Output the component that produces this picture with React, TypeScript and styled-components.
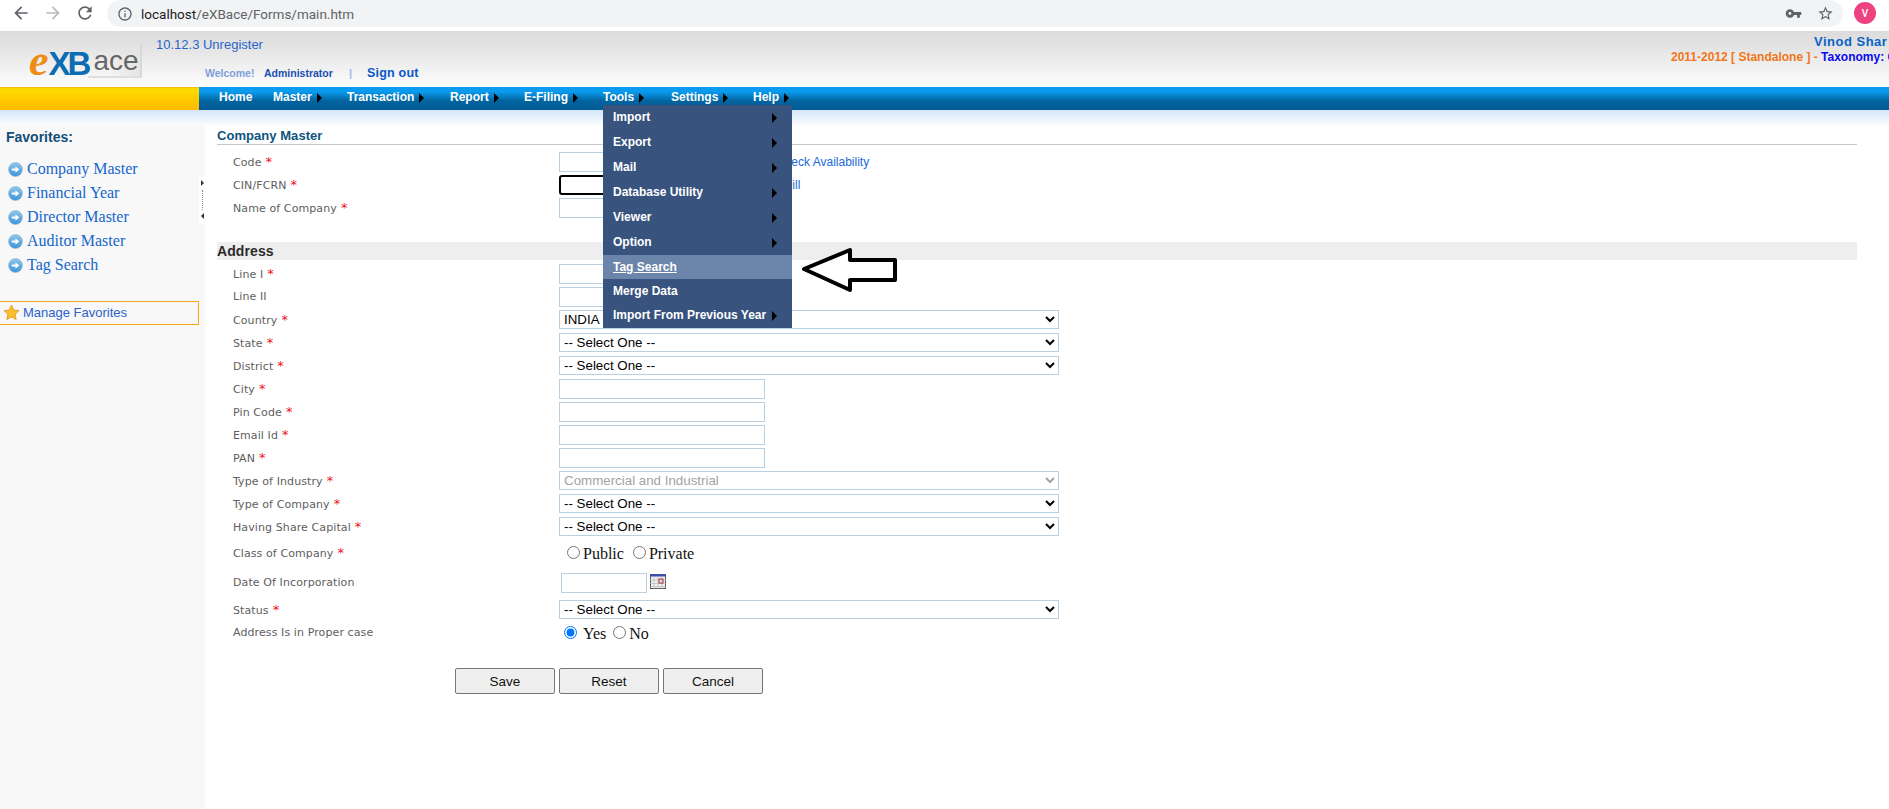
import React from "react";
import styled, { createGlobalStyle } from "styled-components";

const Global = createGlobalStyle`
  html, body { margin: 0; padding: 0; background: #fff; overflow: hidden; }
  body { font-family: "Liberation Sans", Arial, sans-serif; }
  * { box-sizing: border-box; }
`;

const Page = styled.div`
  position: relative;
  width: 1889px;
  height: 809px;
  overflow: hidden;
  display: flex;
  flex-direction: column;
`;

/* Browser chrome */
const Toolbar = styled.div`
  height: 31px;
  flex: none;
  background: #fff;
  display: flex;
  align-items: flex-start;
  padding-left: 11px;
`;
const NavIcon = styled.svg<{ $dim?: boolean }>`
  width: 20px;
  height: 20px;
  margin: 3px 12px 0 0;
  fill: ${(p) => (p.$dim ? "#b9bbbe" : "#5f6368")};
  flex: none;
`;
const UrlPill = styled.div`
  width: 1736px;
  height: 27px;
  background: #f1f3f4;
  border-radius: 14px;
  display: flex;
  align-items: center;
  padding: 0 9px 0 10px;
`;
const PillIcon = styled.svg`
  width: 16px;
  height: 16px;
  fill: #5f6368;
  flex: none;
`;
const UrlText = styled.span`
  font: 13.5px Roboto, sans-serif;
  color: #5f6368;
  margin-left: 8px;
  flex: 1;
  b { font-weight: 400; color: #202124; }
`;
const PillAction = styled.svg`
  width: 17px;
  height: 17px;
  fill: #5f6368;
  margin-left: 15px;
  flex: none;
`;
const Avatar = styled.div`
  width: 22px;
  height: 22px;
  border-radius: 50%;
  background: #ee4280;
  color: #fff;
  font: 500 10px Roboto, sans-serif;
  display: flex;
  align-items: center;
  justify-content: center;
  margin: 2px 0 0 11px;
  flex: none;
`;

/* App header */
const Header = styled.header`
  height: 56px;
  flex: none;
  background: linear-gradient(#dcdcdc 0%, #e2e2e2 25%, #fdfdfd 100%);
  display: flex;
  position: relative;
`;
const LogoBox = styled.div`
  width: 156px;
  flex: none;
  padding: 13px 0 0 29px;
`;
const Logo = styled.div`
  width: 114px;
  height: 34px;
  display: flex;
  align-items: baseline;
  line-height: 34px;
  white-space: nowrap;
`;
const LogoE = styled.span`
  font: italic bold 44px/34px "Liberation Serif", serif;
  color: #ef8c13;
`;
const LogoXB = styled.span`
  font: bold 33px/34px "Liberation Sans", sans-serif;
  color: #0d6db2;
  letter-spacing: -3px;
`;
const LogoAce = styled.span`
  font: 28px/34px "Liberation Sans", sans-serif;
  color: #666;
  padding: 0 1px 0 5px;
  align-self: stretch;
  border-right: 2px solid #d8d8d8;
  border-bottom: 2px solid #dedede;
  background: linear-gradient(110deg, transparent 50%, #e4e4e4);
`;
const HeaderMid = styled.div`
  flex: 1;
`;
const Version = styled.div`
  font-size: 13px;
  color: #2966c8;
  margin-top: 6px;
  height: 14px;
  line-height: 16px;
`;
const WelcomeRow = styled.div`
  display: flex;
  align-items: center;
  margin: 12px 0 0 49px;
  height: 20px;
  white-space: nowrap;
`;
const Welcome = styled.span`
  font: bold 10.5px "Liberation Sans", sans-serif;
  color: #7e9fd8;
  width: 59px;
`;
const Admin = styled.span`
  font: bold 10.5px "Liberation Sans", sans-serif;
  color: #1a4fb0;
  width: 85px;
`;
const Sep = styled.span`
  font: bold 11px "Liberation Sans", sans-serif;
  color: #9bbce6;
  width: 18px;
`;
const SignOut = styled.span`
  font: bold 12.5px "Liberation Sans", sans-serif;
  color: #0b57c8;
  letter-spacing: 0.2px;
`;
const HeaderRight = styled.div`
  width: 218px;
  flex: none;
  overflow: hidden;
  white-space: nowrap;
  padding-top: 3px;
`;
const UserName = styled.div`
  font: bold 13px/16px "Liberation Sans", sans-serif;
  color: #0b62c4;
  padding-left: 143px;
  letter-spacing: 0.5px;
`;
const YearLine = styled.div`
  font: bold 12px/14px "Liberation Sans", sans-serif;
  color: #f2761a;
`;
const Taxonomy = styled.span`
  color: #0a0af0;
`;

/* Nav */
const NavBar = styled.nav`
  height: 23px;
  flex: none;
  display: flex;
  position: relative;
`;
const NavGold = styled.div`
  width: 199px;
  flex: none;
  background: linear-gradient(#f5b000 0, #ffdd00 8%, #ffc400 70%, #ffb900 100%);
`;
const NavBlue = styled.div`
  flex: 1;
  position: relative;
  background: linear-gradient(#0a9bef 0, #0a9bef 20%, #02649f 60%, #025a94 100%);
  display: flex;
  align-items: center;
`;
const NavItem = styled.div<{ $w: number }>`
  width: ${(p) => p.$w}px;
  flex: none;
  display: flex;
  align-items: center;
  font: bold 12px "Liberation Sans", sans-serif;
  color: #fff;
  height: 100%;
  padding-bottom: 3px;
  white-space: nowrap;
`;
const Caret = styled.i`
  display: inline-block;
  width: 0;
  height: 0;
  border-left: 5px solid #000;
  border-top: 5px solid transparent;
  border-bottom: 5px solid transparent;
  margin-left: 5px;
  margin-top: 1px;
`;
const NavSpacer = styled.div`
  width: 20px;
  flex: none;
`;
const Menu = styled.div`
  position: absolute;
  left: 404px;
  top: 18px;
  width: 189px;
  background: #39537f;
  z-index: 5;
  height: 223px;
`;
const MenuItem = styled.div<{ $h: number; $active?: boolean }>`
  height: ${(p) => p.$h}px;
  display: flex;
  align-items: center;
  justify-content: space-between;
  padding: 0 15px 1px 10px;
  background: ${(p) => (p.$active ? "#6b84aa" : "transparent")};
  color: #fff;
  font: bold 12px "Liberation Sans", sans-serif;
  text-decoration: ${(p) => (p.$active ? "underline" : "none")};
  white-space: nowrap;
`;
const MenuCaret = styled(Caret)`
  margin: 2px 0 0;
`;

const Fade = styled.div`
  height: 15px;
  flex: none;
  background: linear-gradient(#d3e4f7, #fbfdff);
`;

/* Body */
const Body = styled.div`
  flex: 1;
  display: flex;
  min-height: 0;
`;
const Sidebar = styled.aside`
  width: 205px;
  flex: none;
  background: #f8f8f8;
  position: relative;
  padding-top: 4px;
`;
const FavTitle = styled.div`
  font: bold 14px/16px "Liberation Sans", sans-serif;
  color: #124e78;
  padding-left: 6px;
  margin-bottom: 12px;
`;
const FavItem = styled.div`
  height: 24px;
  display: flex;
  align-items: center;
  padding-left: 8px;
  font: 16px "Liberation Serif", serif;
  color: #1566cc;
`;
const FavIcon = styled.svg`
  width: 15px;
  height: 15px;
  margin-right: 4px;
  flex: none;
`;
const ManageBox = styled.div`
  width: 199px;
  height: 24px;
  margin-top: 24px;
  border: 1px solid #f5a81c;
  border-left: none;
  display: flex;
  align-items: center;
  padding: 0 0 1px 3px;
  font: 13px "Liberation Sans", sans-serif;
  color: #2b62cc;
  gap: 3px;
`;
const StarIcon = styled.svg`
  width: 17px;
  height: 17px;
  flex: none;
`;
const Splitter = styled.div`
  position: absolute;
  left: 199px;
  top: 51px;
  width: 6px;
  height: 47px;
  background: #fff;
  display: flex;
  flex-direction: column;
  align-items: center;
  justify-content: space-between;
  padding: 4px 0;
  font-size: 0;
`;
const SplitDots = styled.div`
  height: 20px;
  border-left: 1px dotted #888;
`;
const TinyRight = styled.i`
  border-left: 3px solid #333;
  border-top: 3px solid transparent;
  border-bottom: 3px solid transparent;
`;
const TinyLeft = styled.i`
  border-right: 3px solid #333;
  border-top: 3px solid transparent;
  border-bottom: 3px solid transparent;
`;

const Main = styled.main`
  flex: 1;
  padding-left: 12px;
  padding-right: 32px;
`;
const SectionTitle = styled.div`
  height: 20px;
  border-bottom: 1px solid #c8c8c8;
  font: bold 13px/21px "Liberation Sans", sans-serif;
  letter-spacing: 0.05px;
  color: #0e5480;
  margin-bottom: 5px;
`;
const AddressBar = styled.div`
  height: 18px;
  margin-top: 23px;
  margin-bottom: 2px;
  background: #eeeeee;
  font: bold 14px/19px "Liberation Sans", sans-serif;
  letter-spacing: 0.1px;
  color: #2b2b2b;
`;
const Row = styled.div<{ $h?: number }>`
  height: ${(p) => p.$h ?? 23}px;
  display: flex;
  align-items: center;
  padding-left: 16px;
`;
const Label = styled.label`
  width: 326px;
  flex: none;
  font: 11px "DejaVu Sans", Verdana, sans-serif;
  letter-spacing: 0.1px;
  color: #5e5e5e;
`;
const Req = styled.span`
  color: #f01020;
  margin-left: 4px;
  font-size: 13px;
`;
const TextInput = styled.input<{ $w?: number; $ml?: number; $focus?: boolean }>`
  width: ${(p) => p.$w ?? 206}px;
  height: 20px;
  margin-left: ${(p) => p.$ml ?? 0}px;
  border: 1px solid #b8d0e0;
  background: #fff;
  padding: 0 3px;
  flex: none;
  ${(p) => p.$focus && "border: 2px solid #000; border-radius: 3px;"}
`;
const Select = styled.select`
  width: 500px;
  height: 19px;
  border: 1px solid #b8d0e0;
  background: #fff;
  font: 13.33px "Liberation Sans", sans-serif;
  color: #000;
  padding: 0;
  flex: none;
  &:disabled { color: #a3a3a3; opacity: 1; }
`;
const SideLink = styled.span<{ $ml: number }>`
  margin-left: ${(p) => p.$ml}px;
  font: 12px "Liberation Sans", sans-serif;
  color: #1a6ad6;
  white-space: nowrap;
`;
const RadioGroup = styled.div<{ $ml: number }>`
  display: flex;
  align-items: center;
  margin-left: ${(p) => p.$ml}px;
  font: 16px "Liberation Serif", serif;
  color: #111;
`;
const Radio = styled.input.attrs({ type: "radio" })<{ $mr: number }>`
  width: 13px;
  height: 13px;
  margin: 0 ${(p) => p.$mr}px 0 0;
  flex: none;
`;
const RadioText = styled.span<{ $mr: number }>`
  margin: 3px ${(p) => p.$mr}px 0 0;
`;
const CalIcon = styled.svg`
  width: 16px;
  height: 15px;
  margin-left: 3px;
  margin-top: -2px;
  flex: none;
`;
const Buttons = styled.div`
  display: flex;
  gap: 4px;
  margin: 24px 0 0 238px;
`;
const Btn = styled.button`
  width: 100px;
  height: 26px;
  border: 1px solid #767676;
  border-radius: 2px;
  background: #efefef;
  font: 13.5px "Liberation Sans", sans-serif;
  color: #111;
  padding: 0;
`;
const CalloutArrow = styled.svg`
  position: absolute;
  left: 798px;
  top: 244px;
  width: 104px;
  height: 52px;
  z-index: 6;
`;

const back = "M20 11H7.83l5.59-5.59L12 4l-8 8 8 8 1.41-1.41L7.83 13H20v-2z";
const fwd = "M12 4l-1.41 1.41L16.17 11H4v2h12.17l-5.58 5.59L12 20l8-8z";
const reload = "M17.65 6.35C16.2 4.9 14.21 4 12 4c-4.42 0-7.99 3.58-7.99 8s3.57 8 7.99 8c3.73 0 6.84-2.55 7.73-6h-2.08c-.82 2.33-3.04 4-5.65 4-3.31 0-6-2.69-6-6s2.69-6 6-6c1.66 0 3.14.69 4.22 1.78L13 11h7V4l-2.35 2.35z";
const info = "M11 7h2v2h-2zm0 4h2v6h-2zm1-9C6.48 2 2 6.48 2 12s4.48 10 10 10 10-4.48 10-10S17.52 2 12 2zm0 18c-4.41 0-8-3.59-8-8s3.59-8 8-8 8 3.59 8 8-3.59 8-8 8z";
const key = "M12.65 10C11.83 7.67 9.61 6 7 6c-3.31 0-6 2.69-6 6s2.69 6 6 6c2.61 0 4.83-1.67 5.65-4H17v4h4v-4h2v-4H12.65zM7 14c-1.1 0-2-.9-2-2s.9-2 2-2 2 .9 2 2-.9 2-2 2z";
const star = "M22 9.24l-7.19-.62L12 2 9.19 8.63 2 9.24l5.46 4.73L5.82 21 12 17.27 18.18 21l-1.63-7.03L22 9.24zM12 15.4l-3.76 2.27 1-4.28-3.32-2.88 4.38-.38L12 6.1l1.71 4.04 4.38.38-3.32 2.88 1 4.28L12 15.4z";

const navItems: [string, number, boolean][] = [
  ["Home", 54, false],
  ["Master", 74, true],
  ["Transaction", 103, true],
  ["Report", 74, true],
  ["E-Filing", 79, true],
  ["Tools", 68, true],
  ["Settings", 82, true],
  ["Help", 60, true],
];

const menuItems: [string, number, boolean][] = [
  ["Import", 25, true],
  ["Export", 25, true],
  ["Mail", 25, true],
  ["Database Utility", 25, true],
  ["Viewer", 25, true],
  ["Option", 25, true],
  ["Tag Search", 24, false],
  ["Merge Data", 24, false],
  ["Import From Previous Year", 25, true],
];

const favs = ["Company Master", "Financial Year", "Director Master", "Auditor Master", "Tag Search"];

const FavBullet = () => (
  <FavIcon viewBox="0 0 16 16">
    <defs>
      <linearGradient id="fb" x1="0" y1="0" x2="0" y2="1">
        <stop offset="0" stopColor="#8fc6ee" />
        <stop offset="1" stopColor="#3a92d6" />
      </linearGradient>
    </defs>
    <circle cx="8" cy="8" r="7.4" fill="url(#fb)" stroke="#9ab8cf" strokeWidth="0.8" />
    <path d="M4 7h4V4.5L12 8l-4 3.5V9H4z" fill="#fff" />
  </FavIcon>
);

const Selectish = ({ value, disabled }: { value: string; disabled?: boolean }) => (
  <Select disabled={disabled} defaultValue={value}>
    <option>{value}</option>
  </Select>
);

export default function App() {
  return (
    <Page>
      <Global />
      <Toolbar>
        <NavIcon viewBox="0 0 24 24"><path d={back} /></NavIcon>
        <NavIcon viewBox="0 0 24 24" $dim><path d={fwd} /></NavIcon>
        <NavIcon viewBox="0 0 24 24"><path d={reload} /></NavIcon>
        <UrlPill>
          <PillIcon viewBox="0 0 24 24"><path d={info} /></PillIcon>
          <UrlText><b>localhost</b>/eXBace/Forms/main.htm</UrlText>
          <PillAction viewBox="0 0 24 24"><path d={key} /></PillAction>
          <PillAction viewBox="0 0 24 24"><path d={star} /></PillAction>
        </UrlPill>
        <Avatar>V</Avatar>
      </Toolbar>

      <Header>
        <LogoBox>
          <Logo>
            <LogoE>e</LogoE>
            <LogoXB>XB</LogoXB>
            <LogoAce>ace</LogoAce>
          </Logo>
        </LogoBox>
        <HeaderMid>
          <Version>10.12.3 Unregister</Version>
          <WelcomeRow>
            <Welcome>Welcome!</Welcome>
            <Admin>Administrator</Admin>
            <Sep>|</Sep>
            <SignOut>Sign out</SignOut>
          </WelcomeRow>
        </HeaderMid>
        <HeaderRight>
          <UserName>Vinod Shar</UserName>
          <YearLine>
            2011-2012 [ Standalone ] - <Taxonomy>Taxonomy: C</Taxonomy>
          </YearLine>
        </HeaderRight>
      </Header>

      <NavBar>
        <NavGold />
        <NavBlue>
          <NavSpacer />
          {navItems.map(([name, w, caret]) => (
            <NavItem key={name} $w={w}>
              {name}
              {caret && <Caret />}
            </NavItem>
          ))}
          <Menu>
            {menuItems.map(([name, h, caret]) => (
              <MenuItem key={name} $h={h} $active={name === "Tag Search"}>
                {name}
                {caret && <MenuCaret />}
              </MenuItem>
            ))}
          </Menu>
        </NavBlue>
      </NavBar>
      <Fade />

      <Body>
        <Sidebar>
          <FavTitle>Favorites:</FavTitle>
          {favs.map((f) => (
            <FavItem key={f}>
              <FavBullet />
              {f}
            </FavItem>
          ))}
          <ManageBox>
            <StarIcon viewBox="0 0 24 24">
              <path d="M12 1.5l3.2 7 7.3.9-5.4 5 1.5 7.6L12 18.2 5.4 22l1.5-7.6-5.4-5 7.3-.9z" fill="#fbc02d" stroke="#d98e04" strokeWidth="1" />
            </StarIcon>
            Manage Favorites
          </ManageBox>
          <Splitter>
            <TinyRight />
            <SplitDots />
            <TinyLeft />
          </Splitter>
        </Sidebar>

        <Main>
          <SectionTitle>Company Master</SectionTitle>
          <Row>
            <Label>Code<Req>*</Req></Label>
            <TextInput />
            <SideLink $ml={11}>Check Availability</SideLink>
          </Row>
          <Row>
            <Label>CIN/FCRN<Req>*</Req></Label>
            <TextInput $w={195} $focus />
            <SideLink $ml={3}>Auto Fill</SideLink>
          </Row>
          <Row>
            <Label>Name of Company<Req>*</Req></Label>
            <TextInput />
          </Row>

          <AddressBar>Address</AddressBar>
          <Row><Label>Line I<Req>*</Req></Label><TextInput /></Row>
          <Row><Label>Line II</Label><TextInput /></Row>
          <Row><Label>Country<Req>*</Req></Label><Selectish value="INDIA" /></Row>
          <Row><Label>State<Req>*</Req></Label><Selectish value="-- Select One --" /></Row>
          <Row><Label>District<Req>*</Req></Label><Selectish value="-- Select One --" /></Row>
          <Row><Label>City<Req>*</Req></Label><TextInput /></Row>
          <Row><Label>Pin Code<Req>*</Req></Label><TextInput /></Row>
          <Row><Label>Email Id<Req>*</Req></Label><TextInput /></Row>
          <Row><Label>PAN<Req>*</Req></Label><TextInput /></Row>
          <Row><Label>Type of Industry<Req>*</Req></Label><Selectish value="Commercial and Industrial" disabled /></Row>
          <Row><Label>Type of Company<Req>*</Req></Label><Selectish value="-- Select One --" /></Row>
          <Row><Label>Having Share Capital<Req>*</Req></Label><Selectish value="-- Select One --" /></Row>
          <Row $h={29}>
            <Label>Class of Company<Req>*</Req></Label>
            <RadioGroup $ml={8}>
              <Radio $mr={3} name="cls" />
              <RadioText $mr={9}>Public</RadioText>
              <Radio $mr={3} name="cls" />
              <RadioText $mr={0}>Private</RadioText>
            </RadioGroup>
          </Row>
          <Row $h={31}>
            <Label>Date Of Incorporation</Label>
            <TextInput $w={86} $ml={2} />
            <CalIcon viewBox="0 0 16 15">
              <rect x="0.5" y="0.5" width="15" height="14" fill="#eee" stroke="#555" />
              <rect x="0" y="0" width="16" height="2.5" fill="#3f4ea8" />
              <path d="M0 6h16M0 9.5h16M0 12.5h16M4 3v12M8 3v12M12 3v12" stroke="#bbb" strokeWidth="0.7" />
              <rect x="9" y="5" width="4" height="4" fill="none" stroke="#a33" />
            </CalIcon>
          </Row>
          <Row><Label>Status<Req>*</Req></Label><Selectish value="-- Select One --" /></Row>
          <Row $h={23}>
            <Label>Address Is in Proper case</Label>
            <RadioGroup $ml={5}>
              <Radio $mr={6} name="pc" defaultChecked />
              <RadioText $mr={7}>Yes</RadioText>
              <Radio $mr={3} name="pc" />
              <RadioText $mr={0}>No</RadioText>
            </RadioGroup>
          </Row>
          <Buttons>
            <Btn>Save</Btn>
            <Btn>Reset</Btn>
            <Btn>Cancel</Btn>
          </Buttons>
        </Main>
      </Body>

      <CalloutArrow viewBox="0 0 104 52">
        <path d="M6 25 L52 6 L52 16 L97 16 L97 36 L52 36 L52 46 Z" fill="#fff" stroke="#000" strokeWidth="4" strokeLinejoin="round" />
      </CalloutArrow>
    </Page>
  );
}
